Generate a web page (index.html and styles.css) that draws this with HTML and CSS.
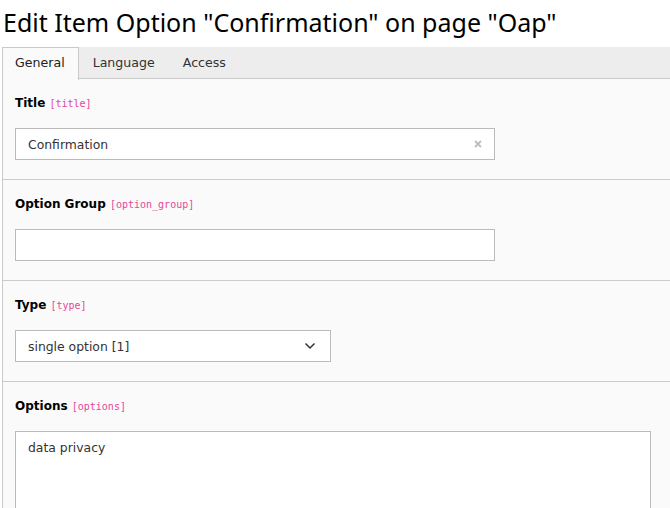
FILE: index.html
```html
<!DOCTYPE html>
<html>
<head>
<meta charset="utf-8">
<link rel="stylesheet" href="styles.css">
</head>
<body>
<div class="page">
  <h1 class="title">Edit Item Option "Confirmation" on page "Oap"</h1>
  <div class="tabs">
    <div class="tab active">General</div>
    <div class="tab">Language</div>
    <div class="tab">Access</div>
  </div>
  <div class="panel">
    <div class="section">
      <div class="label">Title <code class="field">[title]</code></div>
      <div class="input wide">
        <span class="value">Confirmation</span>
        <svg class="clear" width="10" height="10" viewBox="0 0 10 10"><path d="M2 2L8 8M8 2L2 8" stroke="#bdbdbd" stroke-width="1.8"/></svg>
      </div>
    </div>
    <div class="section">
      <div class="label">Option Group <code class="field">[option_group]</code></div>
      <div class="input wide"></div>
    </div>
    <div class="section">
      <div class="label">Type <code class="field">[type]</code></div>
      <div class="input select">
        <span class="value">single option [1]</span>
        <svg class="chev" width="12" height="8" viewBox="0 0 12 8"><path d="M1.5 1.5L6 6L10.5 1.5" fill="none" stroke="#333" stroke-width="1.5"/></svg>
      </div>
    </div>
    <div class="section last">
      <div class="label">Options <code class="field">[options]</code></div>
      <div class="textarea"><span class="value">data privacy</span></div>
    </div>
  </div>
</div>
</body>
</html>
```

FILE: styles.css
```css
html, body {
  margin: 0;
  padding: 0;
  background: #fff;
  overflow: hidden;
}
.page {
  width: 680px;
  padding-left: 2px;
  font-family: "DejaVu Sans", Verdana, sans-serif;
  font-size: 12px;
  color: #333;
}
.title {
  margin: 0;
  height: 47px;
  padding-left: 1px;
  font-family: "Noto Sans", "Open Sans", sans-serif;
  font-weight: 400;
  font-size: 25px;
  line-height: 45px;
  color: #000;
  white-space: nowrap;
}
.tabs {
  display: flex;
  background: #ededed;
  border-bottom: 1px solid #cacaca;
  height: 31px;
  font-size: 12.6px;
}
.tab {
  padding: 0 14px;
  line-height: 31px;
  color: #333;
}
.tab.active {
  background: #fafafa;
  border: 1px solid #cacaca;
  border-bottom: none;
  height: 32px;
  padding: 0 13px 0 12px;
  line-height: 30px;
  color: #222;
}
.panel {
  background: #fafafa;
  border-left: 1px solid #cacaca;
}
.section {
  padding: 15px 12px 19px;
  border-bottom: 1px solid #cacaca;
}
.label {
  height: 18px;
  line-height: 18px;
  margin-bottom: 16px;
  font-weight: bold;
  color: #000;
}
.field {
  font-family: "DejaVu Sans Mono", monospace;
  font-size: 10px;
  font-weight: normal;
  color: #e8459a;
}
.input {
  box-sizing: border-box;
  height: 32px;
  background: #fff;
  border: 1px solid #bbb;
  display: flex;
  align-items: center;
  padding: 0 12px;
  font-size: 12.4px;
}
.wide { width: 480px; }
.select { width: 316px; }
.value { flex: 1; color: #333; }
.clear { margin-right: -1px; }
.chev { margin-right: 2px; }
.textarea {
  box-sizing: border-box;
  width: 636px;
  height: 120px;
  background: #fff;
  border: 1px solid #bbb;
  padding: 8px 12px;
  font-size: 12.4px;
}
```
